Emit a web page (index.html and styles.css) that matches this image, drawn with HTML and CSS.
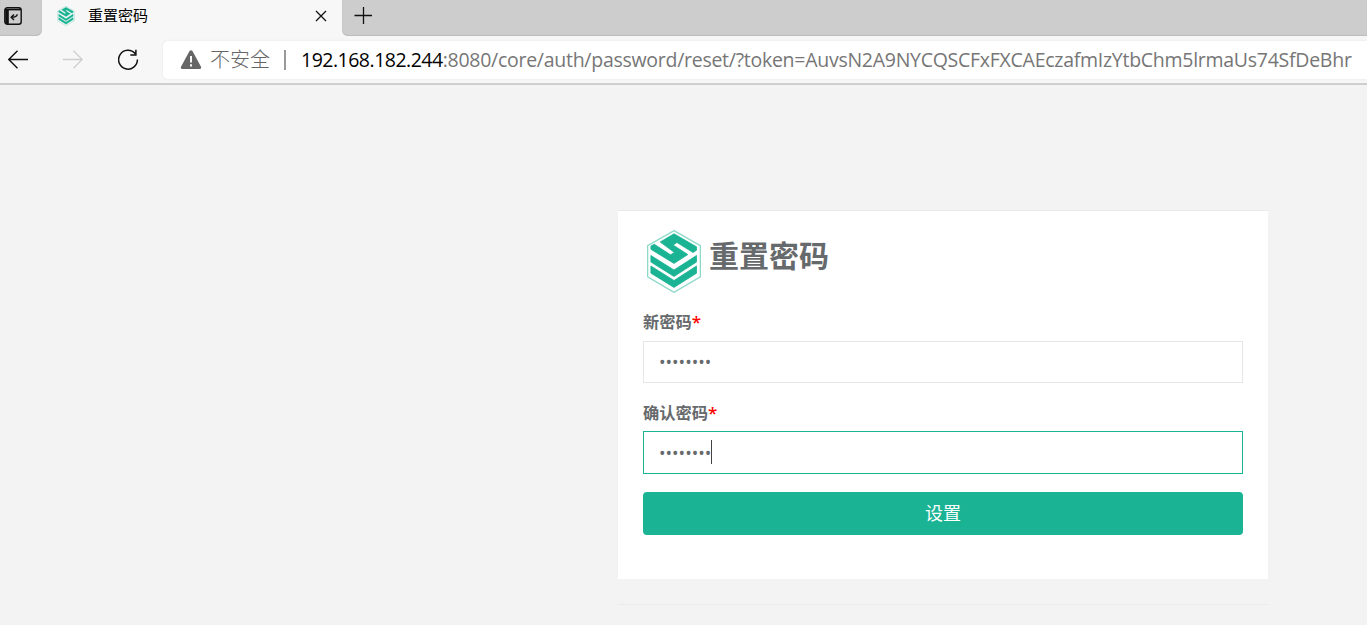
FILE: index.html
```html
<!DOCTYPE html>
<html lang="zh-CN">
<head>
    <meta charset="utf-8">
    <title>重置密码</title>
    <link rel="stylesheet" href="styles.css">
</head>
<body>
    <svg class="symbols" aria-hidden="true">
        <symbol id="logo" viewBox="0 0 54 63">
            <path d="M27 .7L53.4 15.7V46.8L27 62.3.6 46.8V15.7z" fill="none" stroke="#8ed9c9" stroke-width="1.4"/>
            <g fill="#1ab394" stroke="#1ab394" stroke-width=".8" stroke-linejoin="round">
                <path d="M27 3.8L49.5 16.8V20.3L46 22.5 30 12.5 26 14.9 40.8 24.6 27 33.4 3.9 19.3V16L7.3 14.2 23.5 24.8 27.4 22.4 13.2 12z"/>
                <path d="M3.9 25.5L27 40 49.5 25.5V32L27 46.5 3.9 32z"/>
                <path d="M3.9 36L27 50.5 49.5 36V43.2L27 57.4 3.9 43.2z"/>
            </g>
        </symbol>
    </svg>

    <header class="browser">
        <div class="tab-strip">
            <div class="tab-menu">
                <svg width="18" height="18" viewBox="0 0 18 18" fill="none" stroke="#111">
                    <rect x=".8" y=".8" width="16.4" height="16.4" rx="2.5" stroke-width="1.4"/>
                    <path d="M1 2.6h16" stroke-width="1.6"/>
                    <path d="M3 3v14" stroke-width="3.6"/>
                    <path d="M13.2 7.2C13 9.6 11.5 10.3 7.4 10.3M10 7.5L7.2 10.3 10 13" stroke-width="1.4"/>
                </svg>
            </div>
            <div class="tab">
                <svg class="tab-icon"><use href="#logo"/></svg>
                <span class="tab-title">重置密码</span>
                <svg class="tab-close" width="12" height="12" viewBox="0 0 12 12" stroke="#111" stroke-width="1.3">
                    <path d="M1 1l10 10M11 1L1 11"/>
                </svg>
            </div>
            <div class="tab-rest">
                <svg width="18" height="18" viewBox="0 0 18 18" stroke="#111" stroke-width="1.3">
                    <path d="M9.5 0v17M.5 8.5h18"/>
                </svg>
            </div>
        </div>
        <div class="toolbar">
            <div class="nav">
                <svg width="20" height="20" viewBox="0 0 20 20" fill="none" stroke="#111" stroke-width="1.4">
                    <path d="M20 9.5H.8M9.5.8L.8 9.5l8.7 8.7"/>
                </svg>
                <svg width="20" height="20" viewBox="0 0 20 20" fill="none" stroke="#cecece" stroke-width="1.3">
                    <path d="M0 9.5h19.2M10.5.8l8.7 8.7-8.7 8.7"/>
                </svg>
                <svg width="22" height="22" viewBox="0 0 22 22" fill="none" stroke="#111" stroke-width="1.5">
                    <path d="M17.2 4.7A9.4 9.4 0 1 0 19.4 10.5M17.9.8v5.3h-5.6"/>
                </svg>
            </div>
            <div class="address">
                <svg width="22" height="20" viewBox="0 0 22 20">
                    <path d="M9.4 1.3q1.6-2 3.2 0l8.4 15.4q.8 2.3-1.6 2.3H2.6Q.2 19 1 16.7z" fill="#666"/>
                    <path d="M11 6v6.6M11 14.2v2.2" stroke="#fff" stroke-width="1.9"/>
                </svg>
                <span class="insecure">不安全</span>
                <span class="divider"></span>
                <span class="url"><span class="host">192.168.182.244</span><span class="path">:8080/core/auth/password/reset/?token=AuvsN2A9NYCQSCFxFXCAEczafmIzYtbChm5lrmaUs74SfDeBhr</span></span>
            </div>
        </div>
    </header>

    <main class="page">
        <div class="box">
            <div class="heading">
                <svg class="logo"><use href="#logo"/></svg>
                <h2>重置密码</h2>
            </div>
            <form>
                <label>新密码<span class="required">*</span></label>
                <div class="field"><span class="dots">••••••••</span></div>
                <label>确认密码<span class="required">*</span></label>
                <div class="field focus"><span class="dots">••••••••</span><span class="caret"></span></div>
                <button type="button">设置</button>
            </form>
        </div>
        <hr>
    </main>
</body>
</html>
```

FILE: styles.css
```css
* {
    box-sizing: border-box;
}

body {
    margin: 0;
    height: 625px;
    overflow: hidden;
    background: #f3f3f3;
    color: #676a6c;
    font-family: "Open Sans", "Noto Sans CJK SC", sans-serif;
}

svg {
    display: block;
    flex-shrink: 0;
}

.symbols {
    display: none;
}

/* browser bar */
.browser {
    height: 85px;
    background: #f7f7f7;
    border-bottom: 2px solid #cecece;
}

.tab-strip {
    display: flex;
    height: 36px;
}

.tab-menu,
.tab-rest {
    background: #cdcdcd;
    box-shadow: inset 0 -1px 1px #bcbcbc;
}

.tab-menu {
    width: 42px;
    padding: 7px 0 0 4px;
    border-bottom-right-radius: 6px;
}

.tab {
    display: flex;
    width: 300px;
    height: 32px;
    align-items: center;
    padding: 0 15px;
}

.tab-icon {
    width: 18px;
    height: 20px;
}

.tab-title {
    margin: -2px 0 0 13px;
    color: #000;
    font-size: 15px;
    line-height: 20px;
}

.tab-close {
    margin-left: auto;
}

.tab-rest {
    flex: 1;
    padding: 7px 0 0 12px;
    border-bottom-left-radius: 6px;
}

.toolbar {
    display: flex;
    height: 47px;
    padding-top: 5px;
}

.nav {
    display: flex;
    flex-shrink: 0;
    align-items: center;
    gap: 35px;
    width: 163px;
    height: 37px;
    padding-left: 8px;
}

.address {
    display: flex;
    flex: 1;
    align-items: center;
    min-width: 0;
    height: 38px;
    padding-left: 17px;
    background: #fff;
    border-radius: 5px 0 0 5px;
    box-shadow: 0 0 3px #e4e4e4;
    white-space: nowrap;
}

.insecure {
    margin-left: 8px;
    color: #666;
    font-size: 20px;
    font-weight: 300;
    line-height: 36px;
}

.divider {
    flex-shrink: 0;
    width: 2px;
    height: 20px;
    margin: 0 15px 0 14px;
    background: #999;
}

.url {
    font-family: "Open Sans", sans-serif;
    font-size: 19.5px;
    line-height: 36px;
}

.host {
    color: #000;
    letter-spacing: -0.5px;
}

.path {
    color: #767676;
    letter-spacing: -0.27px;
}

/* reset form */
.page {
    width: 650px;
    margin: 125px 0 0 618px;
}

.box {
    height: 369px;
    padding: 19px 25px 0;
    background: #fff;
    border-top: 1px solid #e7eaec;
}

.heading {
    display: flex;
    height: 82px;
    padding-left: 4px;
}

.logo {
    width: 54px;
    height: 63px;
}

h2 {
    margin: 6px 0 0 8px;
    font-size: 30px;
    font-weight: 700;
    line-height: 40px;
}

label {
    display: block;
    height: 29px;
    font-size: 16.25px;
    font-weight: 700;
    line-height: 20px;
}

.required {
    color: #f00;
    font-size: 17px;
    font-weight: 600;
}

.field {
    display: flex;
    align-items: center;
    height: 42px;
    margin-bottom: 20px;
    padding-left: 15px;
    border: 1px solid #e5e6e7;
}

.field.focus {
    height: 43px;
    margin: -1px 0 18px;
    border-color: #1ab394;
}

.dots {
    padding-top: 1px;
    font-size: 17.4px;
    line-height: 39px;
}

.caret {
    width: 1px;
    height: 24px;
    margin-top: -1px;
    background: #444;
}

button {
    display: block;
    width: 100%;
    height: 43px;
    padding: 0;
    border: 0;
    border-radius: 4px;
    background: #1ab394;
    color: #fff;
    font-family: inherit;
    font-size: 18px;
    line-height: 43px;
}

hr {
    height: 1px;
    margin: 25px 0 0;
    border: 0;
    background: #ebebeb;
}
```
